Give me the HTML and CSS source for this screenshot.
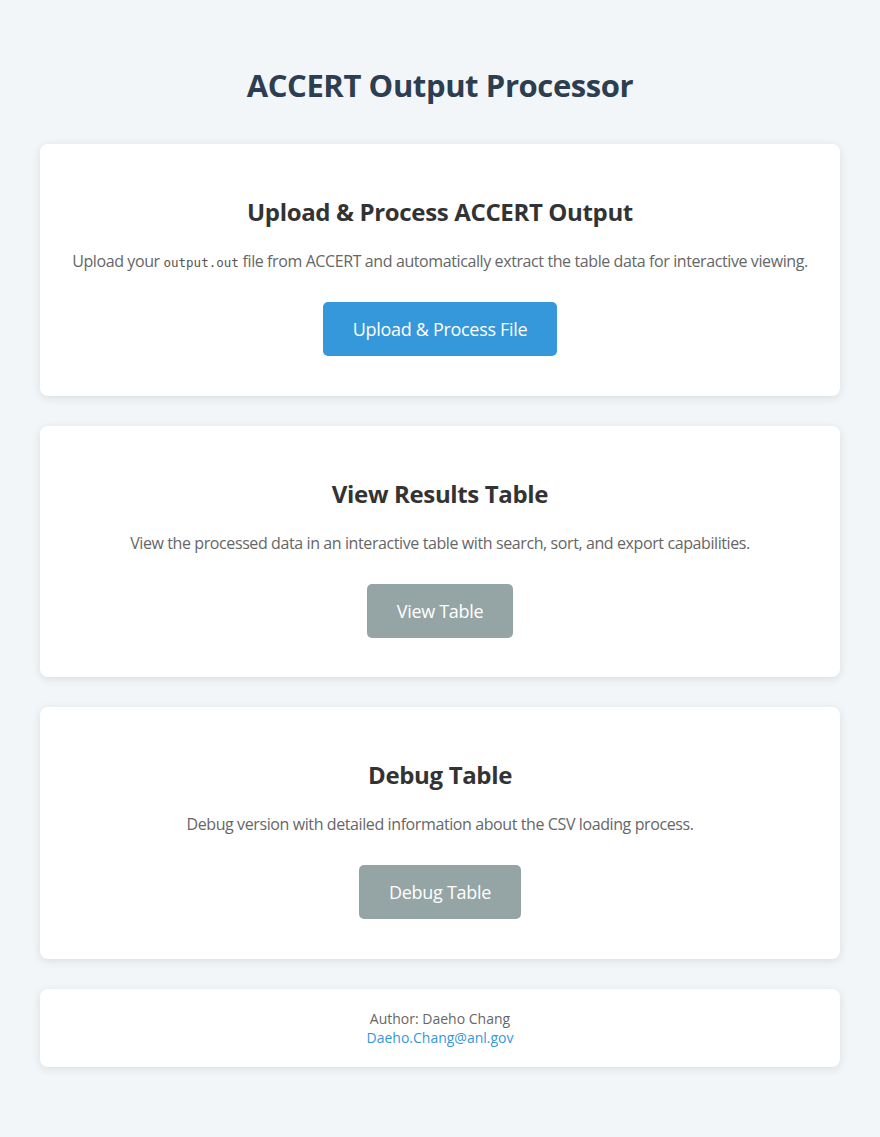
FILE: index.html
```html
<!DOCTYPE html>
<html lang="en">
<head>
<meta charset="utf-8">
<title>ACCERT Output Processor</title>
<link rel="stylesheet" href="styles.css">
</head>
<body>
<div class="container">
  <h1 class="title">ACCERT Output Processor</h1>

  <div class="card">
    <h2 class="card-title">Upload &amp; Process ACCERT Output</h2>
    <p class="card-text">Upload your <code>output.out</code> file from ACCERT and automatically extract the table data for interactive viewing.</p>
    <a class="btn btn-primary" href="#">Upload &amp; Process File</a>
  </div>

  <div class="card">
    <h2 class="card-title">View Results Table</h2>
    <p class="card-text">View the processed data in an interactive table with search, sort, and export capabilities.</p>
    <a class="btn btn-secondary" href="#">View Table</a>
  </div>

  <div class="card">
    <h2 class="card-title">Debug Table</h2>
    <p class="card-text">Debug version with detailed information about the CSV loading process.</p>
    <a class="btn btn-secondary" href="#">Debug Table</a>
  </div>

  <div class="footer">
    <div>Author: Daeho Chang</div>
    <a class="footer-link" href="#">Daeho.Chang@anl.gov</a>
  </div>
</div>
</body>
</html>
```

FILE: styles.css
```css
* { box-sizing: border-box; }

body {
  margin: 0;
  background: #f3f6f9;
  font-family: "Open Sans", "Noto Sans", sans-serif;
  color: #333;
}

.container {
  width: 800px;
  margin: 0 auto;
  padding: 40px 0 60px;
}

.title {
  margin: 23px 0 37px;
  text-align: center;
  font-size: 31px;
  font-weight: 700;
  line-height: 44px;
  color: #2c3e50;
  letter-spacing: -0.4px;
}

.card {
  background: #fff;
  border-radius: 8px;
  box-shadow: 0 2px 10px rgba(0, 0, 0, 0.1);
  padding: 52px 30px 39.67px;
  margin-bottom: 30px;
  text-align: center;
}

.card-title {
  margin: 0 0 21px;
  font-size: 24px;
  line-height: 32px;
  font-weight: 700;
  color: #333;
  letter-spacing: -0.35px;
}

.card-text {
  margin: 0 0 29px;
  font-size: 16px;
  line-height: 24px;
  color: #666;
  letter-spacing: -0.4px;
}

.card-text code {
  font-family: "DejaVu Sans Mono", "Liberation Mono", monospace;
  font-size: 12.5px;
  line-height: 0;
  color: #555;
  letter-spacing: 0;
}

.btn {
  display: inline-block;
  padding: 15px 30px;
  border-radius: 5px;
  font-size: 18px;
  line-height: 24px;
  color: #fff;
  text-decoration: none;
  letter-spacing: -0.3px;
}

.btn-primary { background: #3498db; }
.btn-secondary { background: #95a5a6; }

.footer {
  background: #fff;
  border-radius: 8px;
  box-shadow: 0 2px 10px rgba(0, 0, 0, 0.1);
  padding: 20px;
  text-align: center;
  font-size: 14px;
  line-height: 19px;
  color: #666;
}

.footer-link {
  color: #3498db;
  text-decoration: none;
}
```
